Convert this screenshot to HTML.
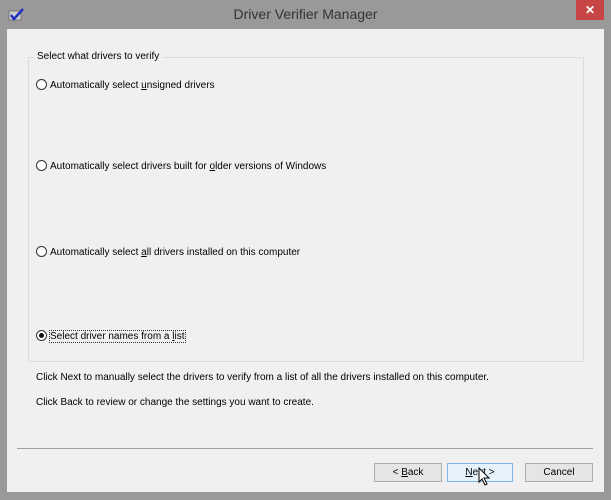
<!DOCTYPE html>
<html><head><style>
body{margin:0;width:611px;height:500px;background:#999;position:relative;overflow:hidden;font-family:"Liberation Sans",sans-serif;font-size:10px;color:#000}
.t{position:absolute;left:0;top:0;width:611px;height:29px;text-align:center;line-height:29px;font-size:14px;color:#333}
.x{position:absolute;left:576px;top:0;width:28px;height:20px;background:#c74545;color:#fff;text-align:center;line-height:20px;font-size:12px;font-weight:bold}
.c{position:absolute;left:7px;top:29px;width:597px;height:463px;background:#f0f0f0}
.g{position:absolute;left:28px;top:57px;width:556px;height:305px;border:1px solid #dcdcdc;box-sizing:border-box}
.gl{position:absolute;left:34px;top:51px;background:#f0f0f0;padding:0 3px}
.r{position:absolute;left:36px;white-space:nowrap}
.r i{display:inline-block;width:11px;height:11px;border:1px solid #333;border-radius:50%;background:#fff;vertical-align:-2px;margin-right:3px;box-sizing:border-box;position:relative}
.r i.s:after{content:"";position:absolute;left:2px;top:2px;width:5px;height:5px;border-radius:50%;background:#111}
.p{position:absolute;left:36px;white-space:nowrap}
.sep{position:absolute;left:17px;top:448px;width:576px;height:1px;background:#a0a0a0}
.b{position:absolute;top:463px;height:19px;border:1px solid #adadad;background:#e5e5e5;box-sizing:border-box;text-align:center;line-height:17px}
</style></head><body>
<svg style="position:absolute;left:8px;top:8px" width="16" height="14"><rect x="1" y="3" width="12" height="9" fill="#ccc" stroke="#777"/><path d="M3 7 L6 11 L15 1" stroke="#2030c0" stroke-width="2.5" fill="none"/></svg>
<div class="t">Driver Verifier Manager</div>
<div class="x">✕</div>
<div class="c"></div>
<div class="g"></div>
<div class="gl">Select what drivers to verify</div>
<div class="r" style="top:79px"><i></i>Automatically select <u>u</u>nsigned drivers</div>
<div class="r" style="top:160px"><i></i>Automatically select drivers built for <u>o</u>lder versions of Windows</div>
<div class="r" style="top:246px"><i></i>Automatically select <u>a</u>ll drivers installed on this computer</div>
<div class="r" style="top:330px"><i class="s"></i><span style="outline:1px dotted #333">Select driver names from a <u>l</u>ist</span></div>
<div class="p" style="top:372px">Click Next to manually select the drivers to verify from a list of all the drivers installed on this computer.</div>
<div class="p" style="top:397px">Click Back to review or change the settings you want to create.</div>
<div class="sep"></div>
<div class="b" style="left:374px;width:68px">&lt; <u>B</u>ack</div>
<div class="b" style="left:447px;width:66px;border-color:#7eb4ea;background:#e5f1fb"><u>N</u>ext &gt;</div>
<div class="b" style="left:525px;width:68px">Cancel</div>
<svg style="position:absolute;left:478px;top:467px" width="14" height="20"><path d="M1 1 L1 15 L4 12 L7 18 L9 17 L6 11 L11 11 Z" fill="#fff" stroke="#000"/></svg>
</body></html>
